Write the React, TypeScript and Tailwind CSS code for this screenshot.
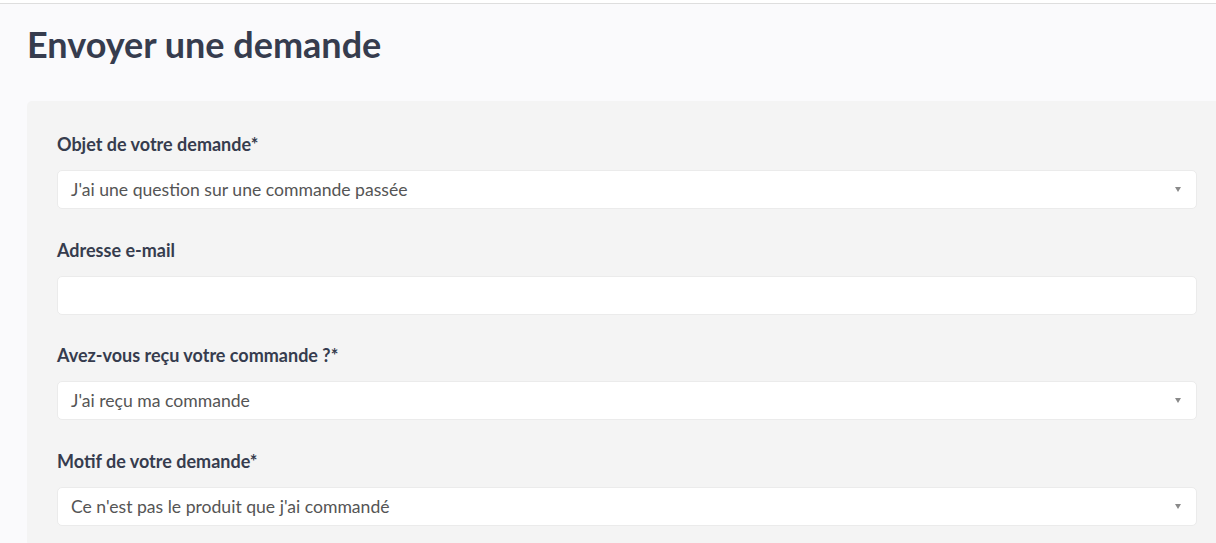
import React from 'react';

interface Field {
  label: string;
  required: boolean;
  value: string;
  select: boolean;
}

const fields: Field[] = [
  { label: "Objet de votre demande", required: true, value: "J'ai une question sur une commande passée", select: true },
  { label: "Adresse e-mail", required: false, value: "", select: false },
  { label: "Avez-vous reçu votre commande ?", required: true, value: "J'ai reçu ma commande", select: true },
  { label: "Motif de votre demande", required: true, value: "Ce n'est pas le produit que j'ai commandé", select: true },
];

export default function App() {
  return (
    <div className="w-[1216px] h-[543px] overflow-hidden bg-white font-['Lato','Liberation_Sans',sans-serif]">
      <div className="mt-[3px] h-full border-t border-[#dedede] bg-[#fafafc] pl-[27px]">
        <h1 className="pt-[16px] text-[36px] leading-[48px] font-bold text-[#363c4e]">
          Envoyer une demande
        </h1>

        <div className="mt-[33px] w-[1200px] rounded-[5px] bg-[#f4f4f4] px-[30px] pt-[30px] pb-[20px]">
          <div className="flex flex-col gap-[27.7px]">
            {fields.map((f) => (
              <div key={f.label} className="flex flex-col">
                <label className="text-[18px] leading-[26px] font-bold text-[#363c4e] mb-[13px]">
                  {f.label}
                  {f.required && '*'}
                </label>
                <div className="relative flex items-center h-[39px] w-[1140px] rounded-[5px] border border-[#ebebeb] bg-white pl-[13px] pr-[15px]">
                  <span className="text-[17.6px] text-[#555555] leading-none">{f.value}</span>
                  {f.select && (
                    <span className="ml-auto w-0 h-0 border-l-[3px] border-r-[3px] border-t-[5px] border-l-transparent border-r-transparent border-t-[#8a8a8a]" />
                  )}
                </div>
              </div>
            ))}
          </div>
        </div>
      </div>
    </div>
  );
}
